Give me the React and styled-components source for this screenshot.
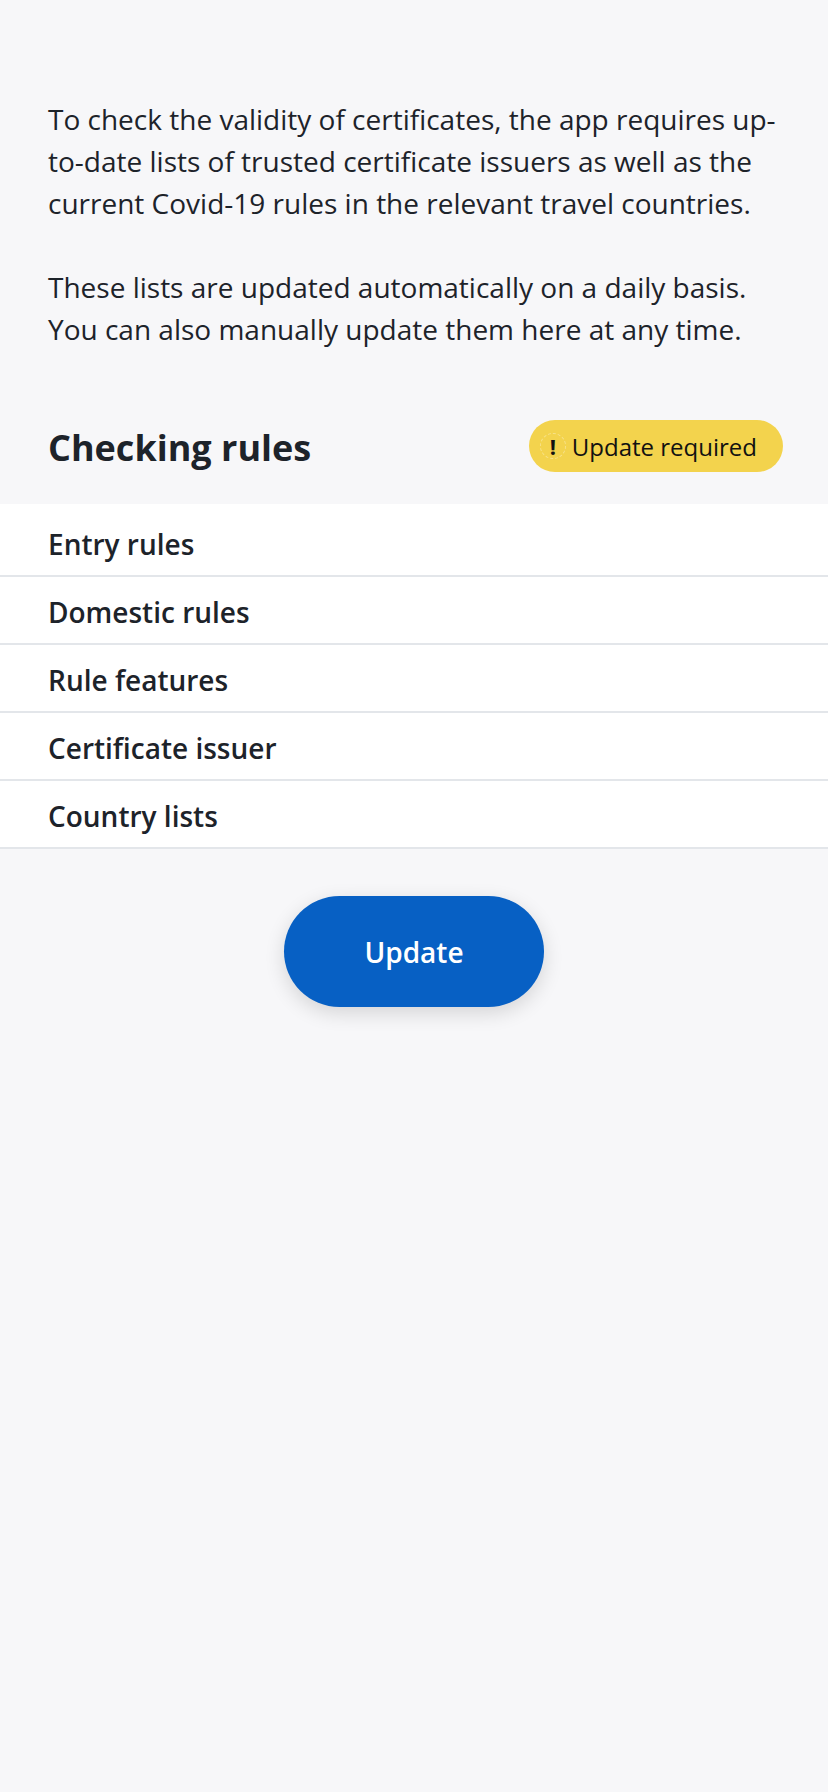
import React from 'react'
import styled, { createGlobalStyle } from 'styled-components'

const rules = [
  'Entry rules',
  'Domestic rules',
  'Rule features',
  'Certificate issuer',
  'Country lists'
]

const GlobalStyle = createGlobalStyle`
  html, body {
    margin: 0;
    padding: 0;
    background: #f7f7f9;
  }

  body {
    font-family: 'Open Sans', 'Noto Sans', sans-serif;
    color: #1d232a;
    -webkit-font-smoothing: antialiased;
  }
`

const Screen = styled.div`
  min-height: 1792px;
  background: #f7f7f9;
  padding-top: 98px;
  box-sizing: border-box;
`

const Intro = styled.div`
  padding: 0 48px;
`

const Paragraph = styled.p`
  margin: 0 0 42px;
  font-size: 28px;
  line-height: 42px;
  font-weight: 400;

  &:last-child {
    margin-bottom: 0;
  }
`

const SectionHeader = styled.div`
  display: flex;
  align-items: center;
  justify-content: space-between;
  padding: 68px 45px 30px 48px;
`

const Title = styled.h2`
  margin: 4px 0 0;
  font-size: 36px;
  line-height: 52px;
  font-weight: 700;
`

const Badge = styled.div`
  display: flex;
  align-items: center;
  gap: 6px;
  height: 52px;
  padding: 0 26px 0 11px;
  border-radius: 26px;
  background: #f3d34d;
  color: #111;
  font-size: 24px;
  box-sizing: border-box;
`

const BadgeIcon = styled.span`
  width: 24px;
  height: 24px;
  border-radius: 50%;
  border: 1px dashed rgba(255, 255, 255, 0.35);
  display: flex;
  align-items: center;
  justify-content: center;
  font-weight: 700;
  font-size: 22px;
  line-height: 1;
`

const List = styled.div`
  background: #ffffff;
`

const Row = styled.div`
  padding: 5px 48px 0;
  height: 61px;
  line-height: 61px;
  font-size: 28px;
  font-weight: 600;
  border-bottom: 2px solid #e3e6ea;

  &:first-child {
    padding-top: 10px;
  }
`

const Actions = styled.div`
  display: flex;
  justify-content: center;
  padding-top: 47px;
`

const Button = styled.button`
  width: 260px;
  height: 111px;
  border: none;
  border-radius: 56px;
  background: #0760c4;
  color: #ffffff;
  font-family: 'Open Sans', 'Noto Sans', sans-serif;
  font-size: 28px;
  font-weight: 600;
  box-shadow: 0 6px 20px rgba(0, 0, 0, 0.14);
  cursor: pointer;
`

export default function App() {
  return (
    <>
      <GlobalStyle />
      <Screen>
        <Intro>
          <Paragraph>
            To check the validity of certificates, the app requires up-to-date lists of trusted certificate issuers as well as the current Covid-19 rules in the relevant travel countries.
          </Paragraph>
          <Paragraph>
            These lists are updated automatically on a daily basis. You can also manually update them here at any time.
          </Paragraph>
        </Intro>

        <SectionHeader>
          <Title>Checking rules</Title>
          <Badge>
            <BadgeIcon>!</BadgeIcon>
            Update required
          </Badge>
        </SectionHeader>

        <List>
          {rules.map(rule => (
            <Row key={rule}>{rule}</Row>
          ))}
        </List>

        <Actions>
          <Button>Update</Button>
        </Actions>
      </Screen>
    </>
  )
}
